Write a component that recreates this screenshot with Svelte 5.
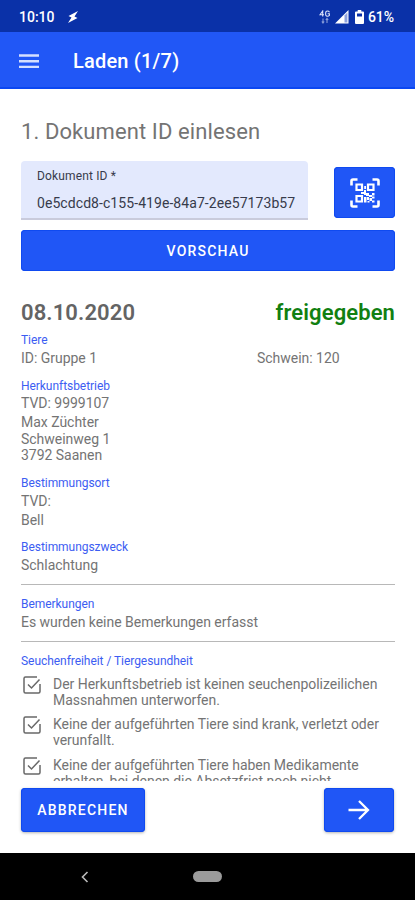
<script lang="ts">
  const checks = [
    ['Der Herkunftsbetrieb ist keinen seuchenpolizeilichen', 'Massnahmen unterworfen.'],
    ['Keine der aufgeführten Tiere sind krank, verletzt oder', 'verunfallt.'],
    ['Keine der aufgeführten Tiere haben Medikamente', 'erhalten, bei denen die Absetzfrist noch nicht'],
  ];

  const address = ['Max Züchter', 'Schweinweg 1', '3792 Saanen'];

  let documentId = $state('0e5cdcd8-c155-419e-84a7-2ee57173b57');
</script>

<div class="screen">
  <!-- Status bar -->
  <div class="status">
    <span class="time">10:10</span>
    <svg class="bolt" viewBox="0 0 12 14" width="12" height="14"><path d="M11 1L1.500 6L4.500 7.500L1 13L10.500 8L7.500 6.500Z" fill="#fff"/></svg>
    <div class="status-right">
      <svg viewBox="0 0 12 14" width="12" height="14" fill="none" stroke="#dbe2fa" stroke-width="1.1">
        <path d="M3.7 6.5V1L1 4.8h4M10.5 2.2Q9.8 1 8.4 1Q6.6 1 6.6 3.7T8.4 6.2Q9.6 6.2 10.4 5.4V3.8H8.7"/>
        <path d="M4 13V8.5M2.8 11.5L4 13l1.2-1.5M8 8.5V13M6.8 10L8 8.5L9.2 10" stroke-opacity=".6"/>
      </svg>
      <svg class="signal" viewBox="0 0 14 14" width="14" height="14"><path d="M0 13.5L13.5 0V13.5Z" fill="#fff"/><path d="M9.5 5.5L12.4 2.6V12.4H9.5Z" fill="#8fa3df"/></svg>
      <svg class="battery" viewBox="0 0 9 14" width="9" height="14"><path d="M2.7 0h3.6v1.5H8a1 1 0 0 1 1 1V13a1 1 0 0 1-1 1H1a1 1 0 0 1-1-1V2.500a1 1 0 0 1 1-1h1.700z" fill="#fff"/><path d="M2 3.500h5v3H2z" fill="#0a31a8"/></svg>
      <span class="percent">61%</span>
    </div>
  </div>

  <!-- App bar -->
  <header class="appbar">
    <button class="menu" aria-label="Menü">
      <svg viewBox="0 0 20 14" width="20" height="14" stroke="#d5e0ff" stroke-width="2.4"><path d="M0 1.500h20M0 7.200h20M0 12.900h20"/></svg>
    </button>
    <h1>Laden (1/7)</h1>
  </header>

  <main>
    <h2>1. Dokument ID einlesen</h2>

    <div class="id-row">
      <label class="field">
        <span>Dokument ID *</span>
        <input bind:value={documentId} />
      </label>
      <button class="btn scan" aria-label="QR-Code scannen">
        <svg viewBox="0 0 30 30" width="30" height="30" fill="none" stroke="#fff">
          <path d="M1.500 7.500V3q0-1.500 1.500-1.500h4.500M22.500 1.500H27q1.500 0 1.500 1.500v4.500M28.500 22.500V27q0 1.500-1.500 1.500h-4.500M7.500 28.500H3q-1.500 0-1.500-1.500v-4.500" stroke-width="2.600"/>
          <path d="M6.500 6.500h5.500v5.500H6.500zM18 6.500h5.500v5.500H18zM6.500 18h5.500v5.500H6.500z" stroke-width="2.200"/>
          <path d="M14.200 8h1.800v3h-1.800zM14 12h2v5h-2zM11 14h3v2h-3zM16 15h3v3h-3zM19 17h3v2h-3zM22 15h2.500v2.500H22zM14 19h2.500v5.500H14zM17 19h2v3h-2zM19.500 20h2.500v3h-2.500zM22 18.500h2.500v2H22zM17.500 23h2v1.500h-2zM22 22.500h2.500v2H22z" fill="#fff" stroke="none"/>
        </svg>
      </button>
    </div>

    <button class="btn preview">VORSCHAU</button>

    <div class="content">
      <div class="headline">
        <strong>08.10.2020</strong>
        <strong class="released">freigegeben</strong>
      </div>

      <section>
        <h3>Tiere</h3>
        <div class="animals">
          <p>ID: Gruppe 1</p>
          <p>Schwein: 120</p>
        </div>
      </section>

      <section class="origin">
        <h3>Herkunftsbetrieb</h3>
        <p>TVD: 9999107</p>
        <div class="address">
          {#each address as line}
            <div>{line}</div>
          {/each}
        </div>
      </section>

      <section class="target">
        <h3>Bestimmungsort</h3>
        <p>TVD:</p>
        <p class="name">Bell</p>
      </section>

      <section class="purpose">
        <h3>Bestimmungszweck</h3>
        <p>Schlachtung</p>
      </section>

      <section class="remarks">
        <h3>Bemerkungen</h3>
        <p>Es wurden keine Bemerkungen erfasst</p>
      </section>

      <section class="health">
        <h3>Seuchenfreiheit / Tiergesundheit</h3>
        {#each checks as lines}
          <div class="check">
            <svg viewBox="0 0 18 18" width="18" height="18" fill="none" stroke="#686868" stroke-width="1.500">
              <path d="M14 1H2.500Q1 1 1 2.500V15.500Q1 17 2.500 17H15.500Q17 17 17 15.500V8"/>
              <path d="M5 8.500L8.500 12L16.500 3.500"/>
            </svg>
            <div>
              {#each lines as line}
                <div>{line}</div>
              {/each}
            </div>
          </div>
        {/each}
      </section>
    </div>

    <footer>
      <button class="btn cancel">ABBRECHEN</button>
      <button class="btn next" aria-label="Weiter">
        <svg viewBox="0 0 22 20" width="22" height="20" fill="none" stroke="#fff" stroke-width="2.300"><path d="M0.500 10h19.500M11 1L20 10L11 19"/></svg>
      </button>
    </footer>
  </main>

  <!-- System navigation -->
  <nav>
    <svg class="back" viewBox="0 0 8 12" width="8" height="12" fill="none" stroke="#bbb" stroke-width="1.600"><path d="M6.500 1L1.500 6L6.500 11"/></svg>
    <span class="pill"></span>
  </nav>
</div>

<style>
  .screen {
    width: 415px;
    height: 900px;
    display: flex;
    flex-direction: column;
    overflow: hidden;
    background: #fff;
    color: #747474;
    font-family: Roboto, sans-serif;
  }
  h1, h2, h3, p { margin: 0; font-weight: 400; }
  button { border: 0; padding: 0; font-family: inherit; }
  svg { display: block; flex: none; }

  .status {
    height: 32px;
    flex: none;
    box-sizing: border-box;
    display: flex;
    align-items: center;
    padding: 2px 20px 0 19px;
    background: #0a31a8;
    color: #fff;
    font-size: 14px;
    font-weight: 500;
  }
  .time { width: 48px; }
  .status-right { display: flex; align-items: center; margin-left: auto; }
  .signal { margin-left: 4px; }
  .battery { margin-left: 6px; }
  .percent { margin-left: 4px; width: 27px; font-size: 14px; letter-spacing: -0.1px; }

  .appbar {
    height: 57px;
    flex: none;
    box-sizing: border-box;
    display: flex;
    align-items: center;
    padding: 3px 0 0 19px;
    background: #2157f6;
    border-bottom: 2px solid #0b47f2;
  }
  .menu { background: none; }
  h1 {
    margin-left: 34px;
    color: #fff;
    font-size: 20px;
    font-weight: 500;
    letter-spacing: 0.2px;
  }

  main {
    height: 764px;
    flex: none;
    box-sizing: border-box;
    display: flex;
    flex-direction: column;
    padding: 28px 20px 0 21px;
  }
  h2 {
    font-size: 22px;
    line-height: 30px;
    letter-spacing: 0.1px;
  }

  .id-row {
    display: flex;
    align-items: center;
    justify-content: space-between;
    margin-top: 14px;
  }
  .field {
    width: 287px;
    height: 59px;
    box-sizing: border-box;
    padding: 8px 11px 0 16px;
    border-radius: 4px 4px 0 0;
    border-bottom: 2px solid #c9cbdc;
    background: #e3e9fd;
  }
  .field span {
    display: block;
    color: #373b4b;
    font-size: 12px;
    line-height: 15px;
    letter-spacing: 0.15px;
  }
  .field input {
    display: block;
    width: 100%;
    height: 20px;
    margin-top: 9px;
    padding: 0;
    border: 0;
    outline: 0;
    background: none;
    color: #373b4b;
    font: 14px Roboto, sans-serif;
    letter-spacing: 0.070px;
  }

  .btn {
    display: flex;
    align-items: center;
    justify-content: center;
    border-radius: 4px;
    background: #2056f6;
    box-shadow: inset 0 0 0 1px #0f4af0;
    color: #fff;
    font-size: 14px;
    font-weight: 500;
    letter-spacing: 1.200px;
  }
  .scan { width: 61px; height: 51px; margin-top: 4px; }
  .preview { height: 41px; flex: none; margin-top: 10px; }

  .content {
    height: 481px;
    flex: none;
    margin-top: 29px;
    overflow: hidden;
    font-size: 14px;
    letter-spacing: -0.025px;
  }
  .headline {
    display: flex;
    justify-content: space-between;
    height: 31px;
    font-size: 22px;
    line-height: 25px;
    letter-spacing: 0.1px;
  }
  .headline strong { font-weight: 600; color: #646464; }
  .headline .released { color: #118011; }

  h3 {
    color: #3c5df2;
    font-size: 12px;
    line-height: 18px;
    letter-spacing: -0.050px;
  }
  p { line-height: 18px; }
  .animals { display: grid; grid-template-columns: 236px 1fr; }
  .origin { margin-top: 10px; }
  .origin p { line-height: 17px; }
  .address { margin-top: 2px; line-height: 16.500px; }
  .target { margin-top: 10px; }
  .target .name { margin-top: 1px; }
  .purpose { margin-top: 9px; padding-bottom: 10px; border-bottom: 1px solid #b8b8b8; }
  .remarks { padding: 10px 0 10px; border-bottom: 1px solid #b8b8b8; }
  .health { padding-top: 10px; }
  .check {
    display: flex;
    gap: 12px;
    height: 32px;
    margin: 6px 0 8.500px 2px;
    line-height: 16.300px;
    white-space: nowrap;
  }

  footer {
    display: flex;
    justify-content: space-between;
    margin-top: 7px;
  }
  footer .btn { height: 44px; box-shadow: inset 0 0 0 1px #0f4af0, 0 1px 3px rgba(0, 0, 0, 0.3); }
  .cancel { width: 124px; }
  .next { width: 70px; margin-right: 1px; }

  nav {
    flex: 1;
    display: flex;
    align-items: center;
    background: #000;
  }
  .back { margin-left: 81px; }
  .pill {
    width: 29px;
    height: 11px;
    margin-left: 104px;
    border-radius: 6px;
    background: #9b9b9b;
  }
</style>
